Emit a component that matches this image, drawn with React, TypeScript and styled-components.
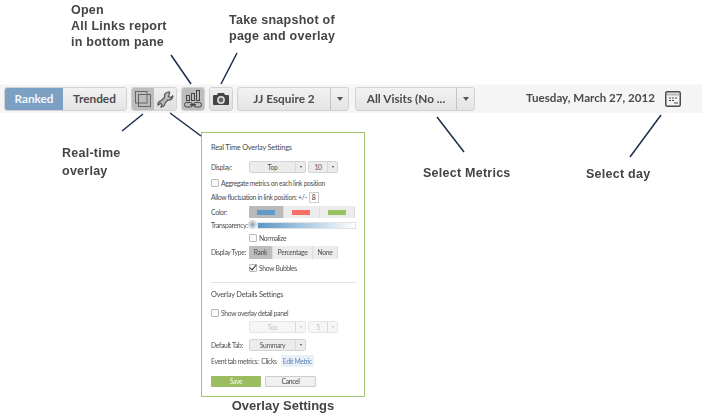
import React from "react";
import styled, { createGlobalStyle } from "styled-components";

const GlobalStyle = createGlobalStyle`
  html, body {
    margin: 0;
    padding: 0;
    background: #fff;
  }
`;

const uiFont = `"Lato", "Open Sans", sans-serif`;
const noteFont = `"Liberation Sans", Arial, sans-serif`;

const Page = styled.div`
  position: relative;
  width: 702px;
  height: 414px;
  overflow: hidden;
  padding-top: 84px;
  box-sizing: border-box;
  font-family: ${uiFont};
  filter: blur(0.3px);
`;

const Toolbar = styled.div`
  display: flex;
  align-items: center;
  height: 29px;
  padding: 0 21px 0 4px;
  background: #f5f5f5;
  border-top: 1px solid #fafafa;
  box-sizing: border-box;
`;

const Segmented = styled.div`
  display: flex;
  height: 24px;
  border: 1px solid #d2d2d2;
  border-radius: 3px;
  overflow: hidden;
  box-sizing: border-box;
  margin-right: 4px;
`;

const Seg = styled.div<{ $w: number; $active?: boolean }>`
  display: flex;
  align-items: center;
  justify-content: center;
  width: ${(p) => p.$w}px;
  padding-bottom: 2px;
  box-sizing: border-box;
  font-size: 11.8px;
  font-weight: 700;
  color: ${(p) => (p.$active ? "#f4f7fa" : "#4b4b4b")};
  background: ${(p) =>
    p.$active ? "#7ba0c4" : "linear-gradient(#f2f2f2, #e4e4e4)"};
`;

const IconSeg = styled.div<{ $w: number; $on?: boolean }>`
  display: flex;
  align-items: center;
  justify-content: center;
  width: ${(p) => p.$w}px;
  background: ${(p) =>
    p.$on ? "#bdbdbd" : "linear-gradient(#efefef, #dfdfdf)"};
`;

const Drop = styled.div<{ $w: number; $mr?: number }>`
  display: flex;
  height: 24px;
  width: ${(p) => p.$w}px;
  margin-right: ${(p) => p.$mr ?? 0}px;
  border: 1px solid #d2d2d2;
  border-radius: 3px;
  box-sizing: border-box;
  background: linear-gradient(#f2f2f2, #e4e4e4);
  font-size: 11.8px;
  font-weight: 700;
  color: #4b4b4b;
`;

const DropLabel = styled.div`
  flex: 1;
  display: flex;
  align-items: center;
  justify-content: center;
  padding-bottom: 1px;
`;

const DropArrow = styled.div`
  display: flex;
  align-items: center;
  justify-content: center;
  width: 17px;
  border-left: 1px solid #c4c4c4;
  &::after {
    content: "";
    border-left: 3.5px solid transparent;
    border-right: 3.5px solid transparent;
    border-top: 4px solid #555;
  }
`;

const DateBox = styled.div`
  margin-left: auto;
  display: flex;
  align-items: center;
  gap: 10px;
  font-size: 11.6px;
  font-weight: 700;
  color: #4a4a4a;
`;

const DateText = styled.span`
  padding-bottom: 3px;
`;

const PanelWrap = styled.div`
  width: 164px;
  margin: 19px 0 0 201px;
`;

const Panel = styled.div`
  height: 265px;
  padding: 8px 8px 0 9px;
  border: 1.5px solid #a3c46f;
  box-sizing: border-box;
  background: #fff;
  font-size: 6.8px;
  letter-spacing: -0.34px;
  color: #4f4f4f;
`;

const Row = styled.div<{ $gap?: number }>`
  display: flex;
  align-items: center;
  height: 12px;
  margin-top: ${(p) => p.$gap ?? 0}px;
  white-space: nowrap;
`;

const Title = styled(Row)`
  font-size: 7.4px;
  letter-spacing: -0.22px;
  color: #4a4a4a;
`;

const Label = styled.div<{ $w?: number }>`
  width: ${(p) => p.$w ?? 38}px;
  flex-shrink: 0;
`;

const Check = styled.span<{ $on?: boolean }>`
  position: relative;
  width: 6px;
  height: 6px;
  margin-right: 2px;
  border: 1px solid #bbb;
  border-radius: 1px;
  background: #fafafa;
  flex-shrink: 0;
  ${(p) =>
    p.$on &&
    `&::after {
      content: "";
      position: absolute;
      left: 1px;
      top: -2px;
      width: 3px;
      height: 6px;
      border-right: 1.5px solid #333;
      border-bottom: 1.5px solid #333;
      transform: rotate(40deg);
    }`}
`;

const MiniSelect = styled.div<{ $w: number; $off?: boolean; $mr?: number }>`
  display: flex;
  width: ${(p) => p.$w}px;
  height: 12px;
  margin-right: ${(p) => p.$mr ?? 0}px;
  border: 1px solid ${(p) => (p.$off ? "#e6e6e6" : "#d4d4d4")};
  border-radius: 2px;
  box-sizing: border-box;
  background: ${(p) => (p.$off ? "#f6f6f6" : "#ececec")};
  color: ${(p) => (p.$off ? "#c4c4c4" : "#555")};
`;

const MiniLabel = styled.div`
  flex: 1;
  display: flex;
  align-items: center;
  justify-content: center;
`;

const MiniArrow = styled.div<{ $off?: boolean }>`
  display: flex;
  align-items: center;
  justify-content: center;
  width: 9px;
  border-left: 1px solid #d8d8d8;
  &::after {
    content: "";
    border-left: 1.5px solid transparent;
    border-right: 1.5px solid transparent;
    border-top: 2px solid ${(p) => (p.$off ? "#bbb" : "#444")};
  }
`;

const NumBox = styled.div`
  display: flex;
  align-items: center;
  justify-content: center;
  width: 10px;
  height: 11px;
  margin-left: 2px;
  border: 1px solid #ccc;
  box-sizing: border-box;
  color: #333;
`;

const Swatches = styled.div`
  display: flex;
  width: 106px;
  height: 12px;
  border-radius: 1px;
  overflow: hidden;
`;

const Swatch = styled.div<{ $bg: string; $sel?: boolean }>`
  flex: 1;
  display: flex;
  align-items: center;
  justify-content: center;
  background: ${(p) => (p.$sel ? "#b9b9b9" : "#ececec")};
  border-right: 1px solid #dcdcdc;
  &::after {
    content: "";
    width: 18px;
    height: 5px;
    background: ${(p) => p.$bg};
  }
`;

const Slider = styled.div`
  position: relative;
  flex: 1;
  height: 5px;
  margin-left: 8px;
  border: 1px solid #e2e2e2;
  background: linear-gradient(90deg, #5b97c6, #fff);
  &::before {
    content: "";
    position: absolute;
    left: -10px;
    top: -3px;
    width: 9px;
    height: 9px;
    border-radius: 50%;
    background: radial-gradient(circle, #8fb0cc 30%, #d8d8d8 36%);
  }
`;

const SmallSeg = styled.div<{ $w: number; $sel?: boolean }>`
  display: flex;
  align-items: center;
  justify-content: center;
  width: ${(p) => p.$w}px;
  height: 13px;
  background: ${(p) => (p.$sel ? "#bdbdbd" : "#ececec")};
  border-right: 1px solid #dcdcdc;
`;

const Rule = styled.div`
  height: 1px;
  margin-top: 8px;
  background: #e2e2e2;
`;

const EditLink = styled.span`
  margin-left: 4px;
  padding: 2px 2px;
  background: #e9f0f8;
  color: #5f86b3;
`;

const Save = styled.div`
  display: flex;
  align-items: center;
  justify-content: center;
  width: 50px;
  height: 11px;
  margin-right: 4px;
  border-radius: 1px;
  background: #9cbd5f;
  color: #f4f8ea;
`;

const Cancel = styled.div`
  display: flex;
  align-items: center;
  justify-content: center;
  width: 51px;
  height: 11px;
  border: 1px solid #ccc;
  border-radius: 1px;
  box-sizing: border-box;
  background: #f0f0f0;
  color: #444;
`;

const Caption = styled.div`
  margin-top: 1px;
  text-align: center;
  font: 700 13px/16px ${noteFont};
  color: #444;
`;

// callouts sit on the screenshot as free annotations
const Note = styled.div<{ $x: number; $y: number }>`
  position: absolute;
  left: ${(p) => p.$x}px;
  top: ${(p) => p.$y}px;
  font: 700 12.5px/16px ${noteFont};
  letter-spacing: 0.25px;
  color: #444;
  white-space: pre-line;
`;

const Leaders = styled.svg`
  position: absolute;
  left: 0;
  top: 0;
  pointer-events: none;
`;

const lines = [
  [171, 55, 191, 84],
  [237, 53, 221, 84],
  [143, 114, 122, 131],
  [170, 113, 201, 136],
  [437, 117, 464, 152],
  [661, 115, 630, 157],
];

const OverlayIcon = () => (
  <svg width="16" height="16" viewBox="0 0 16 16" fill="none" stroke="#666" strokeWidth="1">
    <rect x="0.5" y="0.5" width="11.5" height="11.5" />
    <rect x="3.5" y="3.5" width="12" height="12" />
  </svg>
);

const WrenchIcon = () => (
  <svg width="17" height="17" viewBox="0 0 17 17">
    <path
      d="M11.5 1a4 4 0 0 0-3.8 5.2L4 9.8A3.6 3.6 0 0 0 1 14.2l2.4-2 1.7 1.4-1.3 2.4a3.6 3.6 0 0 0 4-3.4l3-3.6A4 4 0 0 0 15.8 4.8l-2.4 2-1.9-1.4 1.2-4.2z"
      fill="#bbb"
      stroke="#555"
      strokeWidth="1.2"
      strokeLinejoin="round"
    />
  </svg>
);

const LinksChartIcon = () => (
  <svg width="18" height="18" viewBox="0 0 18 18" fill="none" stroke="#444" strokeWidth="1">
    <rect x="2.5" y="5.5" width="3" height="5" />
    <rect x="7.5" y="3.5" width="3" height="7" />
    <rect x="12.5" y="0.5" width="3" height="10" />
    <rect x="0.5" y="12.5" width="8" height="4.5" rx="2.2" />
    <rect x="9.5" y="12.5" width="8" height="4.5" rx="2.2" />
    <path d="M6 14.7h6" strokeWidth="1.5" />
  </svg>
);

const CameraIcon = () => (
  <svg width="16" height="14" viewBox="0 0 16 14">
    <path d="M1 3h3l1-2h6l1 2h3a1 1 0 0 1 1 1v8a1 1 0 0 1-1 1H1a1 1 0 0 1-1-1V4a1 1 0 0 1 1-1z" fill="#444" />
    <circle cx="8" cy="8" r="3.9" fill="#e2e2e2" />
    <circle cx="8" cy="8" r="2.4" fill="#666" />
  </svg>
);

const CalendarIcon = () => (
  <svg width="16" height="16" viewBox="0 0 16 16" fill="none">
    <rect x="0.75" y="0.75" width="14.5" height="14.5" rx="1.5" stroke="#4a4a4a" strokeWidth="1.5" fill="#f2f2f2" />
    <path d="M2 3.5h12" stroke="#bbb" strokeWidth="2" />
    <path d="M4 7h2M7 7h2M10 7h2M4 9.5h2M7 9.5h2M9 12h4" stroke="#444" strokeWidth="1.2" />
  </svg>
);

const SmallSelect = ({ w, text, off, mr }: { w: number; text: string; off?: boolean; mr?: number }) => (
  <MiniSelect $w={w} $off={off} $mr={mr}>
    <MiniLabel>{text}</MiniLabel>
    <MiniArrow $off={off} />
  </MiniSelect>
);

export default function App() {
  return (
    <Page>
      <GlobalStyle />
      <Toolbar>
        <Segmented>
          <Seg $w={58} $active>Ranked</Seg>
          <Seg $w={63}>Trended</Seg>
        </Segmented>
        <Segmented>
          <IconSeg $w={22} $on><OverlayIcon /></IconSeg>
          <IconSeg $w={22}><WrenchIcon /></IconSeg>
        </Segmented>
        <Segmented>
          <IconSeg $w={22} $on><LinksChartIcon /></IconSeg>
        </Segmented>
        <Segmented>
          <IconSeg $w={22}><CameraIcon /></IconSeg>
        </Segmented>
        <Drop $w={112} $mr={6}>
          <DropLabel>JJ Esquire 2</DropLabel>
          <DropArrow />
        </Drop>
        <Drop $w={120}>
          <DropLabel>All Visits (No ...</DropLabel>
          <DropArrow />
        </Drop>
        <DateBox>
          <DateText>Tuesday, March 27, 2012</DateText>
          <CalendarIcon />
        </DateBox>
      </Toolbar>

      <PanelWrap>
        <Panel>
          <Title>Real Time Overlay Settings</Title>
          <Row $gap={8}>
            <Label>Display:</Label>
            <SmallSelect w={57} text="Top" mr={2} />
            <SmallSelect w={30} text="10" />
          </Row>
          <Row $gap={4}><Check />Aggregate metrics on each link position</Row>
          <Row $gap={2}>Allow fluctuation in link position: +/-<NumBox>8</NumBox></Row>
          <Row $gap={3}>
            <Label>Color:</Label>
            <Swatches>
              <Swatch $bg="#5f9ac8" $sel />
              <Swatch $bg="#f76f66" />
              <Swatch $bg="#97c262" />
            </Swatches>
          </Row>
          <Row $gap={1}>
            <Label>Transparency:</Label>
            <Slider />
          </Row>
          <Row $gap={1}>
            <Label />
            <Check />Normalize
          </Row>
          <Row $gap={2}>
            <Label>Display Type:</Label>
            <SmallSeg $w={23} $sel>Rank</SmallSeg>
            <SmallSeg $w={39}>Percentage</SmallSeg>
            <SmallSeg $w={24}>None</SmallSeg>
          </Row>
          <Row $gap={4}>
            <Label />
            <Check $on />Show Bubbles
          </Row>
          <Rule />
          <Title $gap={5}>Overlay Details Settings</Title>
          <Row $gap={7}><Check />Show overlay detail panel</Row>
          <Row $gap={2}>
            <Label />
            <SmallSelect w={57} text="Top" off mr={2} />
            <SmallSelect w={30} text="5" off />
          </Row>
          <Row $gap={6}>
            <Label>Default Tab:</Label>
            <SmallSelect w={57} text="Summary" />
          </Row>
          <Row $gap={4}>
            Event tab metrics:&nbsp;&nbsp;Clicks<EditLink>Edit Metric</EditLink>
          </Row>
          <Row $gap={8}>
            <Save>Save</Save>
            <Cancel>Cancel</Cancel>
          </Row>
        </Panel>
        <Caption>Overlay Settings</Caption>
      </PanelWrap>

      <Leaders width="702" height="414">
        {lines.map(([x1, y1, x2, y2]) => (
          <line key={`${x1}-${y1}`} x1={x1} y1={y1} x2={x2} y2={y2} stroke="#1b2d4b" strokeWidth="1.5" />
        ))}
      </Leaders>

      <Note $x={71} $y={2}>{"Open\nAll Links report\nin bottom pane"}</Note>
      <Note $x={229} $y={12}>{"Take snapshot of\npage and overlay"}</Note>
      <Note $x={62} $y={145}>Real-time</Note>
      <Note $x={62} $y={163}>overlay</Note>
      <Note $x={423} $y={165}>Select Metrics</Note>
      <Note $x={586} $y={166}>Select day</Note>
    </Page>
  );
}
